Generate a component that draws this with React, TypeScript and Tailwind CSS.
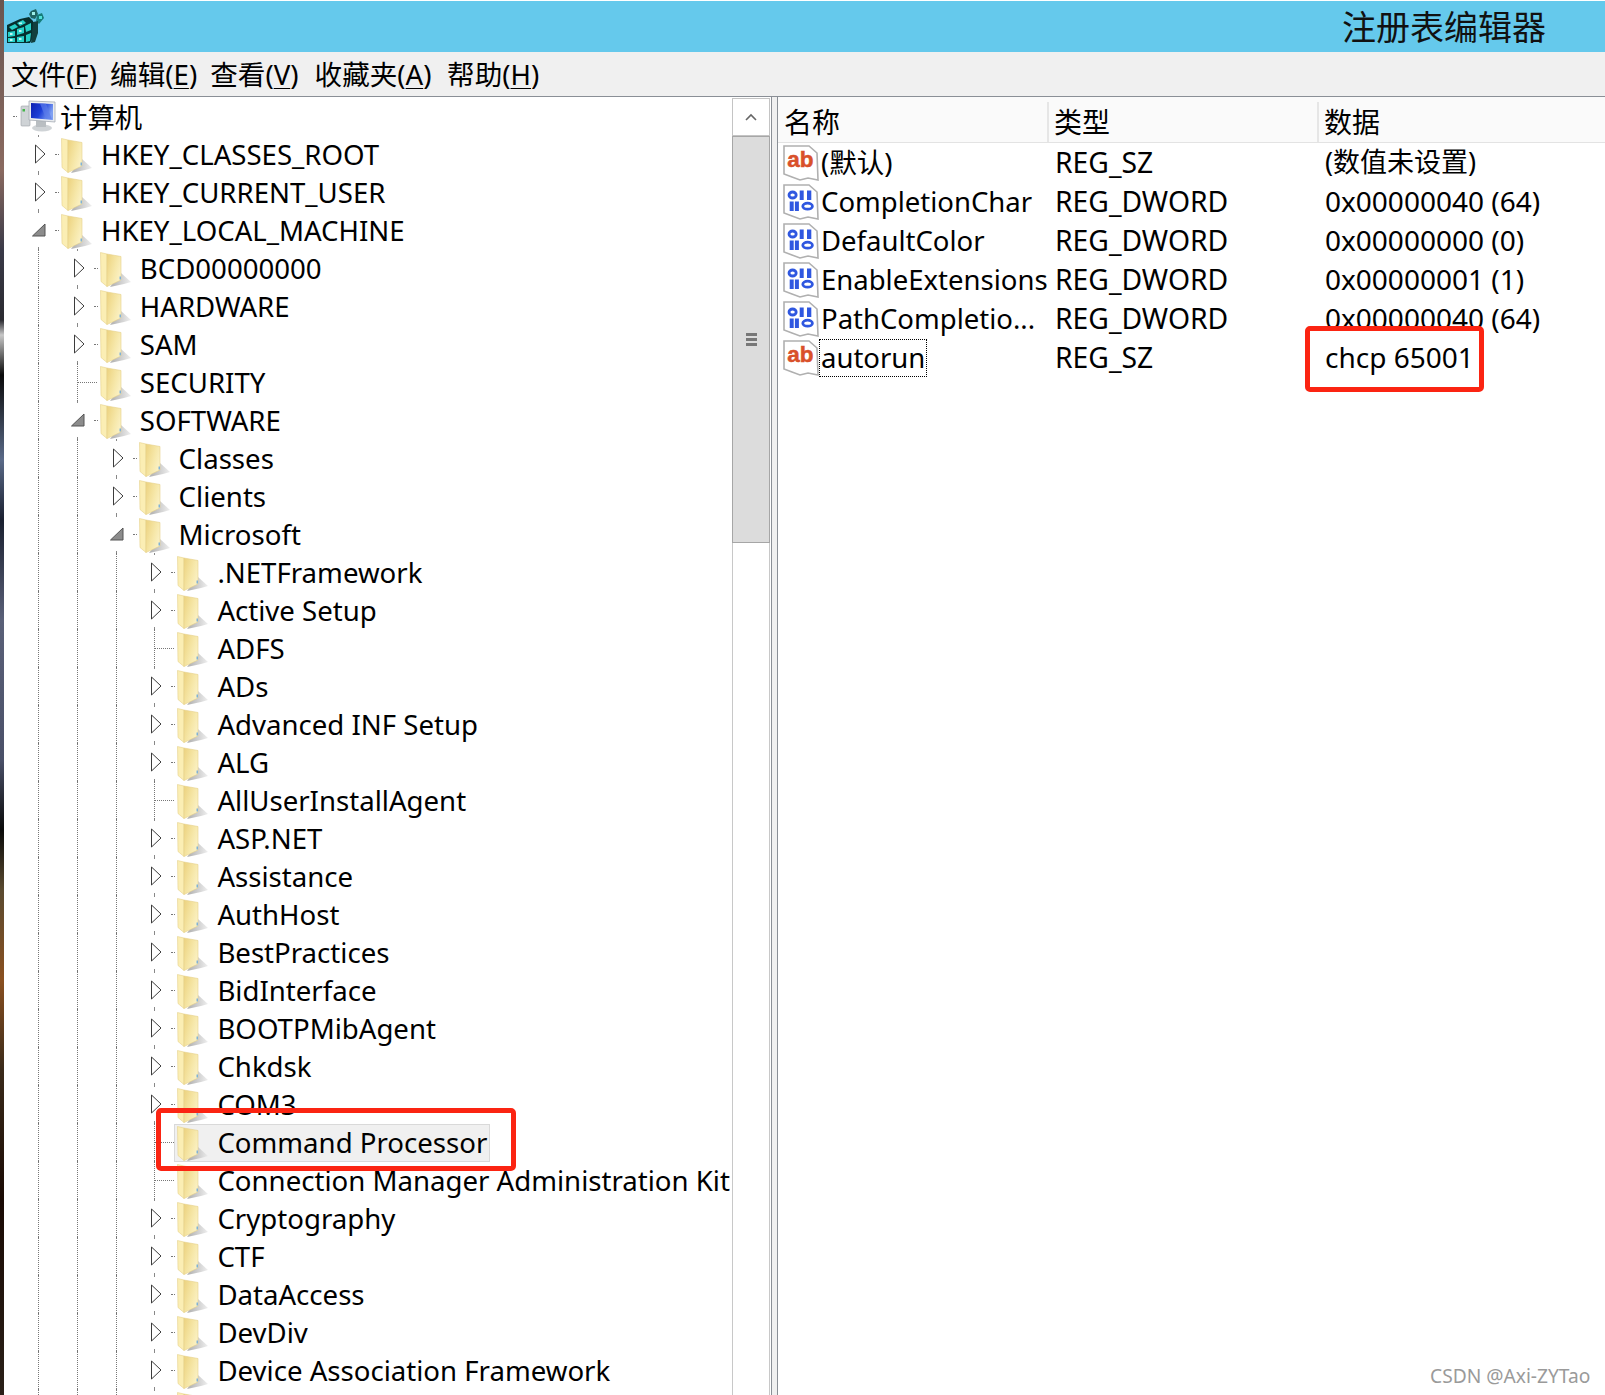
const font = "font-['Noto_Sans','Noto_Sans_CJK_SC',sans-serif]";

type Kind = "closed" | "open" | "leaf";
type Node = { label: string; depth: number; kind: Kind };

const make = (depth: number, items: [string, Kind][]): Node[] =>
  items.map(([label, kind]) => ({ label, depth, kind }));

const tree: Node[] = [
  ...make(1, [["HKEY_CLASSES_ROOT", "closed"], ["HKEY_CURRENT_USER", "closed"], ["HKEY_LOCAL_MACHINE", "open"]]),
  ...make(2, [["BCD00000000", "closed"], ["HARDWARE", "closed"], ["SAM", "closed"], ["SECURITY", "leaf"], ["SOFTWARE", "open"]]),
  ...make(3, [["Classes", "closed"], ["Clients", "closed"], ["Microsoft", "open"]]),
  ...make(4, [
    [".NETFramework", "closed"], ["Active Setup", "closed"], ["ADFS", "leaf"], ["ADs", "closed"],
    ["Advanced INF Setup", "closed"], ["ALG", "closed"], ["AllUserInstallAgent", "leaf"], ["ASP.NET", "closed"],
    ["Assistance", "closed"], ["AuthHost", "closed"], ["BestPractices", "closed"], ["BidInterface", "closed"],
    ["BOOTPMibAgent", "closed"], ["Chkdsk", "closed"], ["COM3", "closed"], ["Command Processor", "leaf"],
    ["Connection Manager Administration Kit", "leaf"], ["Cryptography", "closed"], ["CTF", "closed"],
    ["DataAccess", "closed"], ["DevDiv", "closed"], ["Device Association Framework", "closed"], ["", "closed"],
  ]),
];

const values = [
  { icon: "ab", name: "(默认)", type: "REG_SZ", data: "(数值未设置)", dataSize: "text-[27px]" },
  { icon: "bin", name: "CompletionChar", type: "REG_DWORD", data: "0x00000040 (64)" },
  { icon: "bin", name: "DefaultColor", type: "REG_DWORD", data: "0x00000000 (0)" },
  { icon: "bin", name: "EnableExtensions", type: "REG_DWORD", data: "0x00000001 (1)" },
  { icon: "bin", name: "PathCompletio...", type: "REG_DWORD", data: "0x00000040 (64)" },
  { icon: "ab", name: "autorun", type: "REG_SZ", data: "chcp 65001", focus: true },
];

const Folder = () => (
  <svg width="33" height="36" viewBox="0 0 33 36" className="mt-[1px] shrink-0">
    <defs>
      <linearGradient id="fold" x1="0" y1="0" x2="1" y2="0.6">
        <stop offset="0" stopColor="#ecd27e" />
        <stop offset="0.6" stopColor="#f6e7a8" />
        <stop offset="1" stopColor="#fbf1c4" />
      </linearGradient>
      <linearGradient id="shade" x1="0" y1="0" x2="1" y2="0">
        <stop offset="0" stopColor="#8a8a8a" />
        <stop offset="1" stopColor="#e8e8e8" />
      </linearGradient>
    </defs>
    <path d="M21 21 L31 30 L24 32 L10 35 Z" fill="url(#shade)" opacity="0.7" />
    <path d="M0.5 0.5 L7 2 L7 34.5 L1 29.5 Z" fill="#fbeeb4" stroke="#e6d08a" strokeWidth="0.6" />
    <path d="M7 2 L21 4.5 L21 28 L7 34.5 Z" fill="url(#fold)" stroke="#e6d08a" strokeWidth="0.6" />
    <rect x="19.5" y="24.5" width="1.5" height="3" fill="#7fb2d8" />
  </svg>
);

const Expander = ({ open }: { open: boolean }) => (
  <svg width="14" height="20" viewBox="0 0 14 20" className={`block shrink-0 ${open ? "-translate-x-[3px]" : ""}`}>
    {open ? (
      <path d="M0.5 16 L13 4 L13 16 Z" fill="#8c8c8c" stroke="#555" strokeWidth="1" />
    ) : (
      <path d="M0.5 1 L10 10 L0.5 19 Z" fill="#fff" stroke="#3c3c3c" strokeWidth="1" />
    )}
  </svg>
);

const TreeRow = ({ node }: { node: Node }) => {
  const selected = node.label === "Command Processor";
  return (
    <div className="flex h-[38px] items-center pl-[16px]">
      {[1, 2, 3].slice(0, node.depth - 1).map((d) => (
        <div key={d} className="h-full w-[38.8px] shrink-0 pl-[18px]">
          <div className="h-full border-l border-dotted border-[#777]" />
        </div>
      ))}
      <div className="relative flex h-full w-[38px] shrink-0 items-center">
        {node.kind === "leaf" ? (
          <>
            <div className="ml-[18px] h-full border-l border-dotted border-[#777]" />
            <div className="flex-1 border-t border-dotted border-[#777]" />
          </>
        ) : (
          <>
            <div className="absolute left-[18px] top-0 h-[2px] w-[1px] bg-[#888]" />
            <div className="absolute bottom-0 left-[18px] h-[2px] w-[1px] bg-[#888]" />
            <div className="ml-[15px]"><Expander open={node.kind === "open"} /></div>
            <div className="ml-auto mr-[-1px] w-[4px] border-t border-dotted border-[#777]" />
          </>
        )}
      </div>
      <div className={`mt-[2px] flex h-[38px] items-center border pl-[2px] pr-[2px] ${selected ? "border-[#d9d9d9] bg-[#f0f0f0]" : "border-transparent"}`}>
        <Folder />
        <span className="ml-[7px] whitespace-nowrap text-[27.6px] leading-none text-black">{node.label}</span>
      </div>
    </div>
  );
};

const ComputerIcon = () => (
  <svg width="36" height="32" viewBox="0 0 36 32" className="shrink-0">
    <defs>
      <linearGradient id="scr" x1="0" y1="0" x2="1" y2="0.4">
        <stop offset="0" stopColor="#0c1fb0" />
        <stop offset="0.55" stopColor="#1c3fd8" />
        <stop offset="1" stopColor="#7fa0f2" />
      </linearGradient>
    </defs>
    <ellipse cx="22" cy="28" rx="10" ry="3.5" fill="#cfd3d6" />
    <rect x="16" y="20" width="10" height="7" fill="#b9bec2" />
    <rect x="1" y="6" width="9" height="20" rx="1" fill="#cfd3d6" stroke="#9aa0a4" strokeWidth="0.6" />
    <rect x="2.5" y="9" width="2.5" height="2.5" fill="#43b649" />
    <path d="M9 1 L35 2 L35 22 L9 20 Z" fill="#e9ecef" stroke="#a4abb2" strokeWidth="0.8" />
    <path d="M11 3 L33 4 L33 20 L11 18 Z" fill="url(#scr)" />
    <path d="M20 3.4 L26 3.7 L32 19.4 L26 19 Z" fill="#5a7bea" opacity="0.7" />
  </svg>
);

const RegeditIcon = () => (
  <svg width="38" height="38" viewBox="0 0 38 38" className="shrink-0">
    <path d="M1 17 L14 11 L23 9 L27 13 L29 26 L24 35 L1 35 Z" fill="#06302f" />
    <g fill="#27d0c8">
      <path d="M3 19 L9 16 L12 19 L6 22 Z" />
      <path d="M11 15 L17 12 L20 15 L14 18 Z" />
      <path d="M2 24 L9 23 L9 28 L2 29 Z" />
      <path d="M11 21 L18 19 L18 25 L11 27 Z" />
      <path d="M19 18 L25 15 L25 22 L20 24 Z" />
      <path d="M2 30 L9 30 L9 34 L2 34 Z" />
      <path d="M11 29 L18 28 L18 34 L11 34 Z" />
      <path d="M20 27 L25 25 L24 33 L20 34 Z" />
    </g>
    <g fill="#bff5f0">
      <rect x="4" y="25" width="2.5" height="2" />
      <rect x="13" y="22" width="2.5" height="2" />
      <rect x="4" y="31" width="2.5" height="2" />
      <rect x="13" y="30" width="2.5" height="2" />
      <rect x="13" y="14.5" width="3" height="1.5" />
    </g>
    <path d="M25 3 L30 1 L32 6 L29 11 L25 10 L23 6 Z" fill="#1f6564" />
    <path d="M31 7 L36 5 L38 10 L33 16 L30 13 Z" fill="#157d7a" />
    <rect x="26" y="4" width="3" height="3" fill="#9beee8" />
    <rect x="33" y="8" width="3" height="3" fill="#4fe0d8" />
    <path d="M27 14 L32 13 L32 25 L29 34 L25 35 Z" fill="#123f3e" />
  </svg>
);

const PageIcon = ({ kind }: { kind: string }) => (
  <svg width="36" height="36" viewBox="0 0 36 36" className="shrink-0">
    <path
      d="M1 1 L26 1 L34 8 L35 35 L25 33 L17 35 L9 32 L1 29 Z"
      fill="#fff"
      stroke="#b0b0b0"
      strokeWidth="1.6"
    />
    {kind === "ab" ? (
      <text x="4.3" y="22" fontSize="22.5" fontWeight="700" fill="#d9502a" stroke="#d9502a" strokeWidth="0.5" fontFamily="'Liberation Sans', sans-serif">ab</text>
    ) : (
      <g fill="#2f57e0">
        <ellipse cx="9.6" cy="11" rx="3.6" ry="3" fill="none" stroke="#2f57e0" strokeWidth="2.8" />
        <rect x="16.7" y="6.5" width="4" height="9.5" />
        <rect x="24" y="6.5" width="4.3" height="9.5" />
        <rect x="6.7" y="17.5" width="4" height="9.5" />
        <rect x="11.9" y="17.5" width="4" height="9.5" />
        <ellipse cx="24.6" cy="22.2" rx="4.8" ry="3" fill="none" stroke="#2f57e0" strokeWidth="2.8" />
      </g>
    )}
  </svg>
);

const Menu = ({ zh, k, gap }: { zh: string; k: string; gap: string }) => (
  <span className={`whitespace-nowrap ${gap}`}>
    {zh}(<span className="underline underline-offset-[3px] decoration-1">{k}</span>)
  </span>
);

export default function App() {
  return (
    <div className={`relative flex h-[1395px] w-[1605px] overflow-hidden bg-white text-black ${font}`}>
      <div className="h-full w-[4px] shrink-0 bg-[linear-gradient(to_bottom,#6a5550_0px,#8a6a60_170px,#3a3a48_250px,#2a2a30_320px,#c8c8c8_335px,#0a0a0a_375px,#5a6a88_460px,#1a2030_520px,#5a6078_620px,#4a5068_760px,#0a0a0a_830px,#5a4a30_890px,#8a5020_980px,#3a2a1a_1070px,#1a0a04_1200px,#2a2018_1395px)]" />
      <div className="flex min-w-0 flex-1 flex-col">
        <div className="mt-[1px] flex h-[51px] shrink-0 items-center bg-[#65c9ec] pl-[2px]">
          <RegeditIcon />
          <span className="ml-auto mr-[59px] text-[34px] leading-none text-[#111]">注册表编辑器</span>
        </div>
        <div className="flex h-[45px] shrink-0 items-center border-b border-[#8a8f96] bg-[#f0f0f0] pl-[7px] pt-[1px] text-[27.6px] leading-none">
          <Menu zh="文件" k="F" gap="mr-[13px]" />
          <Menu zh="编辑" k="E" gap="mr-[13px]" />
          <Menu zh="查看" k="V" gap="mr-[16px]" />
          <Menu zh="收藏夹" k="A" gap="mr-[15.5px]" />
          <Menu zh="帮助" k="H" gap="" />
        </div>
        <div className="flex min-h-0 flex-1 bg-[#f0f0f0]">
          <div className="flex w-[768px] shrink-0 border-r border-[#8a8f96] bg-white pr-[1px]">
            <div className="min-w-0 flex-1 overflow-hidden">
              <div className="flex h-[38px] items-center pl-[9px]">
                <div className="mr-[3px] w-[4px] border-t border-dotted border-[#777]" />
                <ComputerIcon />
                <span className="ml-[4px] mt-[3px] text-[27.4px] leading-none">计算机</span>
              </div>
              {tree.map((node, i) => (
                <TreeRow key={i} node={node} />
              ))}
            </div>
            <div className="flex w-[38px] shrink-0 flex-col pt-[1px]">
              <div className="flex h-[38px] items-center justify-center border border-[#c4c4c4]">
                <svg width="12" height="8" viewBox="0 0 12 8"><path d="M1 7 L6 2 L11 7" fill="none" stroke="#666" strokeWidth="1.6" /></svg>
              </div>
              <div className="flex h-[407px] items-center justify-center border border-[#a6a6a6] bg-[#dcdcdc]">
                <div className="flex w-[11px] flex-col gap-[2px]">
                  <div className="h-[3px] bg-[#777]" />
                  <div className="h-[3px] bg-[#777]" />
                  <div className="h-[3px] bg-[#777]" />
                </div>
              </div>
              <div className="flex-1 border-x border-[#c8c8c8]" />
            </div>
          </div>
          <div className="ml-[5px] flex min-w-0 flex-1 flex-col border-l border-[#8a8f96] bg-white">
            <div className="flex h-[46px] shrink-0 items-center border-b border-[#e3e3e3] bg-[#fafafa] pt-[5px] text-[28px] leading-none">
              <div className="flex h-full w-[271px] items-center border-r-2 border-[#e6e6e6] pl-[6px]">名称</div>
              <div className="flex h-full w-[270px] items-center border-r-2 border-[#e6e6e6] pl-[5px]">类型</div>
              <div className="flex h-full flex-1 items-center pl-[5px]">数据</div>
            </div>
            <div className="leading-none">
              {values.map((v) => (
                <div key={v.name} className="flex h-[39px] items-center">
                  <div className="flex w-[271px] items-center pl-[5px] text-[27.5px]">
                    <PageIcon kind={v.icon} />
                    <span className={`whitespace-nowrap px-[1px] leading-[36px] ${v.focus ? "border border-dotted border-black" : "border border-transparent"}`}>{v.name}</span>
                  </div>
                  <div className="w-[270px] pl-[6px] text-[28.3px]">{v.type}</div>
                  <div className={`-mt-[2px] flex-1 pl-[6px] ${v.dataSize ?? "text-[28px]"}`}>{v.data}</div>
                </div>
              ))}
            </div>
          </div>
        </div>
      </div>
      <div className="absolute left-[156px] top-[1108px] h-[63px] w-[360px] rounded-[5px] border-[5px] border-[#fb2412]" />
      <div className="absolute left-[1305px] top-[326px] h-[66px] w-[179px] rounded-[5px] border-[5px] border-[#fb2412]" />
      <div className="absolute left-[1430px] top-[1366px] text-[19.2px] leading-none text-[#9a9a9a]">CSDN @Axi-ZYTao</div>
    </div>
  );
}
